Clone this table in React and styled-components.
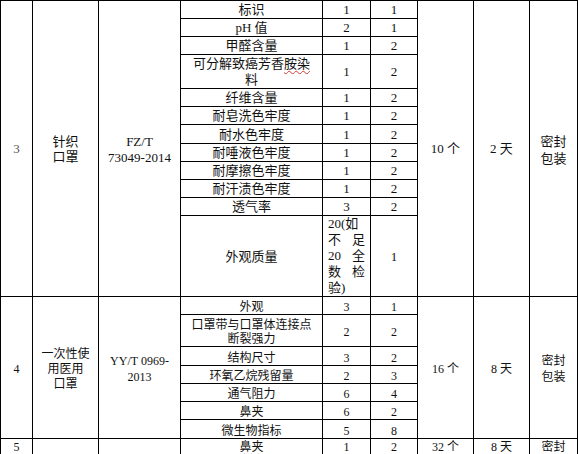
import React from 'react';
import styled, { createGlobalStyle } from 'styled-components';

const Global = createGlobalStyle`
  html, body { margin: 0; padding: 0; background: #fff; }
  body { width: 578px; height: 454px; overflow: hidden; }
`;

const Table = styled.table`
  border-collapse: separate;
  border-spacing: 0;
  table-layout: fixed;
  width: 578px;
  border-top: 1px solid #000;
  border-left: 1px solid #000;
  font-family: "Liberation Serif", "Noto Sans CJK SC", serif;
  color: #111;
`;

const Col = styled.col`
  width: ${p => p.$w}px;
`;

const Cell = styled.td`
  border-right: 1px solid #000;
  border-bottom: 1px solid #000;
  box-sizing: border-box;
  padding: ${p => p.$pad || '0'};
  height: ${p => (p.$h ? `${p.$h}px` : 'auto')};
  text-align: center;
  vertical-align: middle;
  font-size: ${p => p.$fs || 13}px;
  line-height: ${p => p.$lh || 17}px;
  white-space: nowrap;
  overflow: hidden;
`;

const NoteBox = styled.div`
  width: 37px;
  margin: 0 0 0 5px;
  font-size: 13px;
  line-height: 16px;
`;

const NoteLine = styled.div`
  display: flex;
  align-items: center;
  height: 16px;
  justify-content: ${p => (p.$left ? 'flex-start' : 'space-between')};
`;

const NotePart = styled.span`
  display: block;
  line-height: 16px;
`;

const Wavy = styled.span`
  text-decoration: underline wavy ${p => p.$color};
  text-decoration-thickness: 1px;
  text-underline-offset: 2px;
  text-decoration-skip-ink: none;
`;

const Clip = styled.div`
  box-sizing: border-box;
  height: 15px;
  overflow: hidden;
  padding-top: 1px;
  line-height: 14px;
  font-size: 12px;
`;

const widths = [32, 66, 82, 142, 48, 47, 56, 56, 48];

const sec3 = [
  ['标识', '1', '1', 18],
  ['pH 值', '2', '1', 18],
  ['甲醛含量', '1', '2', 18],
  [
    <>
      可分解致癌芳香<Wavy $color="#d23a3a">胺染</Wavy>
      <br />料
    </>,
    '1',
    '2',
    34,
    16,
  ],
  ['纤维含量', '1', '2', 18],
  ['耐皂洗色牢度', '1', '2', 17],
  ['耐水色牢度', '1', '2', 19],
  ['耐唾液色牢度', '1', '2', 17],
  ['耐摩擦色牢度', '1', '2', 18],
  ['耐汗渍色牢度', '1', '2', 18],
  ['透气率', '3', '2', 18],
];

const sec4 = [
  ['外观', '3', '1', 18],
  [
    <>
      口罩带与口罩体连接点
      <br />
      断裂强力
    </>,
    '2',
    '2',
    32,
  ],
  ['结构尺寸', '3', '2', 19],
  ['环氧乙烷残留量', '2', '3', 18],
  ['通气阻力', '6', '4', 18],
  [<Wavy $color="#3b4fc4">鼻夹</Wavy>, '6', '2', 18],
  ['微生物指标', '5', '8', 19],
];

const noteLines = [['20(如'], ['不', '足'], ['20', '全'], ['数', '检'], ['验)']];

export default function App() {
  return (
    <>
      <Global />
      <Table>
        <colgroup>
          {widths.map((w, i) => (
            <Col key={i} $w={w} />
          ))}
        </colgroup>
        <tbody>
          {sec3.map(([label, a, b, h, lh], i) => (
            <tr key={`s3-${i}`}>
              {i === 0 && (
                <>
                  <Cell rowSpan={12} style={{ color: '#555' }}>3</Cell>
                  <Cell rowSpan={12} $lh={15}>
                    针织
                    <br />
                    口罩
                  </Cell>
                  <Cell rowSpan={12} $lh={16} $pad="3px 0 0">
                    FZ/T
                    <br />
                    73049-2014
                  </Cell>
                </>
              )}
              <Cell $h={h} $lh={lh || 17}>{label}</Cell>
              <Cell $h={h}>{a}</Cell>
              <Cell $h={h}>{b}</Cell>
              {i === 0 && (
                <>
                  <Cell rowSpan={12}>10 个</Cell>
                  <Cell rowSpan={12}>2 天</Cell>
                  <Cell rowSpan={12} $lh={17} $pad="3px 0 0">
                    密封
                    <br />
                    包装
                  </Cell>
                </>
              )}
            </tr>
          ))}
          <tr>
            <Cell $h={81}>外观质量</Cell>
            <Cell $h={81} style={{ textAlign: 'left' }}>
              <NoteBox>
                {noteLines.map((parts, i) => (
                  <NoteLine key={i} $left={parts.length === 1}>
                    {parts.map((p, j) => (
                      <NotePart key={j}>{p}</NotePart>
                    ))}
                  </NoteLine>
                ))}
              </NoteBox>
            </Cell>
            <Cell $h={81}>1</Cell>
          </tr>

          {sec4.map(([label, a, b, h], i) => {
            const pad = h > 20 ? '2px 0 0' : '3px 0 0';
            return (
              <tr key={`s4-${i}`}>
                {i === 0 && (
                  <>
                    <Cell rowSpan={7} $fs={12} $pad="3px 0 0">4</Cell>
                    <Cell rowSpan={7} $fs={12} $lh={15} $pad="3px 0 0">
                      一次性使
                      <br />
                      用医用
                      <br />
                      口罩
                    </Cell>
                    <Cell rowSpan={7} $fs={12} $lh={16} $pad="3px 0 0">
                      YY/T 0969-
                      <br />
                      2013
                    </Cell>
                  </>
                )}
                <Cell $h={h} $fs={12} $lh={14} $pad={pad}>{label}</Cell>
                <Cell $h={h} $fs={12} $lh={14} $pad={pad}>{a}</Cell>
                <Cell $h={h} $fs={12} $lh={14} $pad={pad}>{b}</Cell>
                {i === 0 && (
                  <>
                    <Cell rowSpan={7} $fs={12} $pad="3px 0 0">16 个</Cell>
                    <Cell rowSpan={7} $fs={12} $pad="3px 0 0">8 天</Cell>
                    <Cell rowSpan={7} $fs={12} $lh={16} $pad="3px 0 0">
                      密封
                      <br />
                      包装
                    </Cell>
                  </>
                )}
              </tr>
            );
          })}

          <tr>
            {['5', '', '', 'nose', '1', '2', '32 个', '8 天', '密封'].map((t, i) => (
              <Cell key={`s5-${i}`} $h={16} $fs={12}>
                <Clip>{t === 'nose' ? <Wavy $color="#3b4fc4">鼻夹</Wavy> : t}</Clip>
              </Cell>
            ))}
          </tr>
        </tbody>
      </Table>
    </>
  );
}
